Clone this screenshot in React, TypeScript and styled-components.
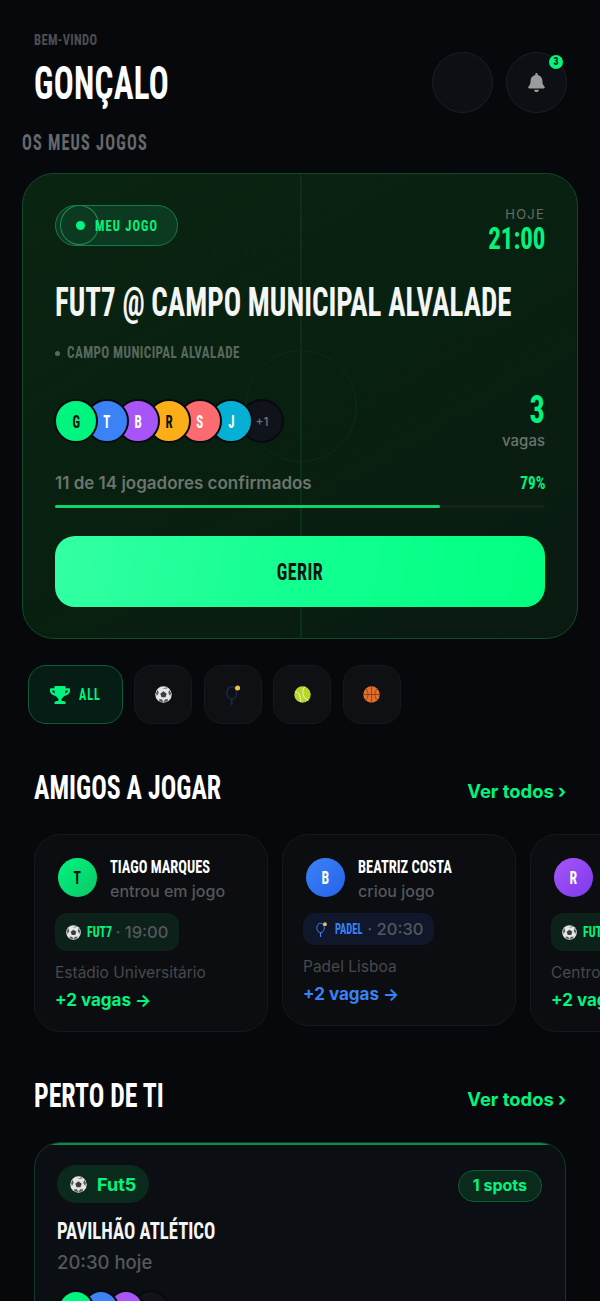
import styled, { createGlobalStyle } from 'styled-components';
import { FaBell, FaTrophy } from 'react-icons/fa';

const display = `"Roboto Condensed", "Liberation Sans Narrow", "DejaVu Sans Condensed", sans-serif`;
const green = '#00f57f';
const blue = '#3b82f6';

// no Bebas here, so the display text is narrowed to the same column widths
const squeeze = (x: number, origin = 'left') => `
    transform: scaleX(${x});
    transform-origin: ${origin} center;
`;

const GlobalStyle = createGlobalStyle`
    html, body {
        margin: 0;
        height: 1301px;
        overflow: hidden;
        background: #07080c;
        font-family: Inter, "Liberation Sans", sans-serif;
    }
    * { box-sizing: border-box; }
`;

const Page = styled.div`
    width: 600px;
    height: 1301px;
    overflow: hidden;
    padding-top: 30px;
`;

const Header = styled.header`
    display: flex;
    justify-content: space-between;
    padding: 0 33px 0 34px;
`;

const Welcome = styled.div`
    font-family: ${display};
    font-weight: 700;
    font-size: 15px;
    line-height: 20px;
    color: #4c4e53;
    letter-spacing: 0.4px;
    ${squeeze(0.84)}
`;

const UserName = styled.h1`
    margin: 6px 0 0;
    font-family: ${display};
    font-weight: 700;
    font-size: 46px;
    line-height: 54px;
    color: #fff;
    letter-spacing: 0.4px;
    ${squeeze(0.72)}
`;

const HeaderActions = styled.div`
    display: flex;
    gap: 13px;
    margin-top: 22px;
`;

const RoundButton = styled.div`
    position: relative;
    width: 61px;
    height: 61px;
    border-radius: 50%;
    background: #0c0f13;
    border: 1.5px solid #1b1e22;
    display: flex;
    align-items: center;
    justify-content: center;
    color: #9a9c9e;
    font-size: 19px;
`;

const Badge = styled.span`
    position: absolute;
    top: 2px;
    right: 3px;
    width: 14px;
    height: 14px;
    border-radius: 50%;
    background: ${green};
    color: #04130b;
    font-family: ${display};
    font-weight: 700;
    font-size: 10px;
    line-height: 14px;
    text-align: center;
`;

const SectionLabel = styled.h2`
    margin: 17px 0 17px 22px;
    font-family: ${display};
    font-weight: 700;
    font-size: 22px;
    line-height: 26px;
    letter-spacing: 1.6px;
    color: #66686c;
    ${squeeze(0.74)}
`;

const HeroCard = styled.section`
    position: relative;
    overflow: hidden;
    width: 556px;
    height: 466px;
    margin-left: 22px;
    padding: 31px 32px;
    border-radius: 32px;
    border: 1.5px solid #0f4a2a;
    background: linear-gradient(150deg, #0a2412 0%, #08200f 50%, #0a1a12 100%);
`;

const PitchLine = styled.div`
    position: absolute;
    top: 0;
    bottom: 0;
    left: 277px;
    width: 1.5px;
    background: #0c2f1b;
`;

const PitchCircle = styled.div`
    position: absolute;
    top: 176px;
    left: 222px;
    width: 112px;
    height: 112px;
    border-radius: 50%;
    border: 1.5px solid #0c2a1a;
`;

const HeroTop = styled.div`
    position: relative;
    display: flex;
    justify-content: space-between;
    align-items: flex-start;
`;

const MinePill = styled.div`
    position: relative;
    display: flex;
    align-items: center;
    gap: 10px;
    width: 123px;
    height: 41px;
    padding-left: 20px;
    border-radius: 21px;
    border: 1.5px solid #1a7a49;
    background: #0b3a20;
    color: ${green};
    font-family: ${display};
    font-weight: 700;
    font-size: 15px;
    letter-spacing: 1.4px;
    white-space: nowrap;
`;

const MineLabel = styled.span`
    ${squeeze(0.83)}
`;

const MineDot = styled.span`
    width: 9px;
    height: 9px;
    flex: none;
    border-radius: 50%;
    background: ${green};
`;

const MineRing = styled.span`
    position: absolute;
    left: 4px;
    top: -1px;
    width: 39px;
    height: 40px;
    border-radius: 50%;
    border: 1.5px solid #1f8a53;
`;

const TimeBlock = styled.div`
    text-align: right;
    margin-top: 1px;
`;

const DayLabel = styled.div`
    font-size: 13px;
    line-height: 16px;
    letter-spacing: 1.2px;
    color: #666d68;
`;

const TimeText = styled.div`
    font-family: ${display};
    font-weight: 700;
    font-size: 32px;
    line-height: 32px;
    color: ${green};
    ${squeeze(0.78, 'right')}
`;

const HeroTitle = styled.h3`
    position: relative;
    margin: 25px 0 0;
    font-family: ${display};
    font-weight: 700;
    font-size: 40px;
    line-height: 48px;
    color: #f4f6f4;
    white-space: nowrap;
    ${squeeze(0.725)}
`;

const VenueRow = styled.div`
    position: relative;
    display: flex;
    align-items: center;
    gap: 7px;
    margin-top: 15px;
    font-family: ${display};
    font-weight: 700;
    font-size: 16px;
    line-height: 22px;
    letter-spacing: 0.5px;
    color: #59685e;
    white-space: nowrap;
`;

const VenueText = styled.span`
    ${squeeze(0.82)}
`;

const VenueDot = styled.span`
    width: 5px;
    height: 5px;
    flex: none;
    border-radius: 50%;
    background: #59685e;
`;

const PlayersRow = styled.div`
    position: relative;
    display: flex;
    justify-content: space-between;
    align-items: flex-start;
    margin-top: 26px;
`;

const AvatarStack = styled.div`
    display: flex;
    margin: 9px 0 0 -1px;
`;

const StackAvatar = styled.div<{ $bg: string; $fg: string; $size: number; $font: number; $overlap: number; $layer: number }>`
    position: relative;
    z-index: ${(p) => p.$layer};
    width: ${(p) => p.$size}px;
    height: ${(p) => p.$size}px;
    flex: none;
    margin-right: -${(p) => p.$overlap}px;
    border-radius: 50%;
    border: 2.5px solid #060a0c;
    background: ${(p) => p.$bg};
    color: ${(p) => p.$fg};
    display: flex;
    align-items: center;
    justify-content: center;
    font-family: ${display};
    font-weight: 700;
    font-size: ${(p) => p.$font}px;
`;

const AvatarLetter = styled.span`
    ${squeeze(0.72, 'center')}
`;

const MoreAvatar = styled(StackAvatar)`
    font-family: Inter, sans-serif;
    font-weight: 500;
`;

const SpotsBlock = styled.div`
    text-align: right;
`;

const SpotsNumber = styled.div`
    font-family: ${display};
    font-weight: 700;
    font-size: 38px;
    line-height: 40px;
    color: ${green};
    ${squeeze(0.8, 'right')}
`;

const SpotsLabel = styled.div`
    margin-top: 1px;
    font-size: 15px;
    font-weight: 500;
    line-height: 20px;
    color: #6a746d;
`;

const ProgressHead = styled.div`
    position: relative;
    display: flex;
    justify-content: space-between;
    align-items: center;
    margin-top: 21px;
    font-size: 17px;
    font-weight: 600;
    line-height: 22px;
    color: #6b756e;
`;

const ProgressValue = styled.span`
    font-family: ${display};
    font-weight: 700;
    font-size: 19px;
    color: ${green};
    ${squeeze(0.8, 'right')}
`;

const ProgressTrack = styled.div`
    position: relative;
    height: 3px;
    margin-top: 11px;
    border-radius: 2px;
    background: #12231a;
`;

const ProgressFill = styled.div`
    height: 100%;
    border-radius: 2px;
    background: #0ed46f;
`;

const ManageButton = styled.button`
    position: relative;
    display: block;
    width: 100%;
    height: 71px;
    margin-top: 28px;
    border: 0;
    border-radius: 20px;
    background: linear-gradient(100deg, #33ffa2 0%, #12ff91 50%, #00ff80 100%);
    color: #04130b;
    font-family: ${display};
    font-weight: 700;
    font-size: 24px;
    letter-spacing: 0.6px;
`;

const ManageLabel = styled.span`
    display: inline-block;
    ${squeeze(0.75, 'center')}
`;

const FilterRow = styled.div`
    display: flex;
    gap: 11.5px;
    margin: 26px 0 0 28px;
`;

const FilterAll = styled.div`
    display: flex;
    align-items: center;
    gap: 9px;
    width: 94.5px;
    height: 59px;
    padding-left: 21px;
    border-radius: 18px;
    border: 1.5px solid #0e5c36;
    background: #061d16;
    color: ${green};
    font-family: ${display};
    font-weight: 700;
    font-size: 16px;
    letter-spacing: 1.4px;
`;

const FilterAllLabel = styled.span`
    ${squeeze(0.75)}
`;

const FilterChip = styled.div`
    display: flex;
    align-items: center;
    justify-content: center;
    width: 58px;
    height: 59px;
    border-radius: 18px;
    border: 1.5px solid #15181c;
    background: #0e1014;
`;

const SectionHead = styled.div<{ $top: number }>`
    display: flex;
    align-items: center;
    justify-content: space-between;
    margin-top: ${(p) => p.$top}px;
    padding: 0 34px;
`;

const SectionTitle = styled.h2`
    margin: 0;
    font-family: ${display};
    font-weight: 700;
    font-size: 34px;
    line-height: 40px;
    color: #fff;
    white-space: nowrap;
    ${squeeze(0.76)}
`;

const SeeAll = styled.span`
    margin-top: 7px;
    font-size: 18.400px;
    font-weight: 700;
    color: ${green};
`;

const FriendsRow = styled.div`
    display: flex;
    align-items: flex-start;
    gap: 14px;
    margin-top: 27px;
    padding-left: 34px;
`;

const FriendCard = styled.article`
    flex: none;
    width: 234px;
    padding: 22px 20px 20px;
    border-radius: 26px;
    border: 1.5px solid #15181c;
    background: #0b0d11;
`;

const FriendHead = styled.div`
    display: flex;
    gap: 13px;
    padding-left: 3px;
`;

const FriendAvatar = styled.div<{ $from: string; $to: string; $fg: string }>`
    width: 39px;
    height: 39px;
    flex: none;
    margin-top: 1px;
    border-radius: 50%;
    background: linear-gradient(135deg, ${(p) => p.$from}, ${(p) => p.$to});
    color: ${(p) => p.$fg};
    display: flex;
    align-items: center;
    justify-content: center;
    font-family: ${display};
    font-weight: 700;
    font-size: 19px;
`;

const FriendName = styled.div`
    margin-top: -1px;
    font-family: ${display};
    font-weight: 700;
    font-size: 18px;
    line-height: 22px;
    color: #fff;
    white-space: nowrap;
    ${squeeze(0.8)}
`;

const FriendAction = styled.div`
    margin-top: 3px;
    font-size: 16px;
    font-weight: 500;
    line-height: 20px;
    color: #54575b;
`;

const GamePill = styled.div<{ $bg: string; $height: number }>`
    display: inline-flex;
    align-items: center;
    gap: 6px;
    height: ${(p) => p.$height}px;
    margin-top: 12px;
    padding: 0 11px;
    border-radius: 12px;
    background: ${(p) => p.$bg};
    font-size: 16.500px;
    font-weight: 500;
    color: #54585b;
    white-space: nowrap;
`;

const GameSport = styled.span<{ $color: string; $trim: number; $scale: number }>`
    margin-right: -${(p) => p.$trim}px;
    font-family: ${display};
    font-weight: 700;
    font-size: 15px;
    color: ${(p) => p.$color};
    ${(p) => squeeze(p.$scale)}
`;

const PlaceText = styled.div`
    margin-top: 11px;
    font-size: 15.500px;
    line-height: 22px;
    color: #46494d;
    white-space: nowrap;
`;

const SpotsLink = styled.div<{ $color: string }>`
    margin-top: 5px;
    font-size: 17px;
    font-weight: 700;
    line-height: 22px;
    color: ${(p) => p.$color};
    white-space: nowrap;
`;

const NearbyCard = styled.article`
    position: relative;
    overflow: hidden;
    width: 532px;
    height: 300px;
    margin: 27px 0 0 34px;
    padding: 22px 23px 22px 22px;
    border-radius: 26px;
    border: 1.5px solid #103a28;
    background: #0b0e12;
`;

const NearbyAccent = styled.div`
    position: absolute;
    top: -1px;
    left: 0;
    right: 0;
    height: 3px;
    background: #0e8a4b;
`;

const NearbyTop = styled.div`
    display: flex;
    justify-content: space-between;
    align-items: center;
`;

const SportTag = styled.div`
    display: flex;
    align-items: center;
    gap: 10px;
    height: 38px;
    padding: 0 13px;
    border-radius: 19px;
    background: #0a2a1c;
    color: ${green};
    font-size: 18px;
    font-weight: 700;
`;

const SpotsTag = styled.div`
    height: 32px;
    margin-top: 4px;
    padding: 0 14px;
    border-radius: 16px;
    border: 1.5px solid #0e5c36;
    background: #0a2a1c;
    color: ${green};
    font-size: 16px;
    font-weight: 700;
    line-height: 29px;
`;

const NearbyName = styled.h3`
    margin: 13px 0 0;
    font-family: ${display};
    font-weight: 700;
    font-size: 24px;
    line-height: 30px;
    color: #f4f5f5;
    white-space: nowrap;
    ${squeeze(0.78)}
`;

const NearbyTime = styled.div`
    margin-top: 4px;
    font-size: 18.500px;
    font-weight: 500;
    line-height: 24px;
    color: #55585c;
`;

const NearbyAvatars = styled.div`
    display: flex;
    margin: 16px 0 0 1px;
`;

function SoccerBall({ size }: { size: number }) {
    return (
        <svg width={size} height={size} viewBox="0 0 32 32">
            <circle cx="16" cy="16" r="15.5" fill="#e6e6e6" />
            <path d="M16 10l6 4.4-2.3 7h-7.4L10 14.4z" fill="#3a3c40" />
            <path d="M11 2.500L16 5l5-2.500 3 1.500-8 1.500zM2 13l3-6 2 6-3.500 6zM30 13l-3-6-2 6 3.500 6zM9 29l-2-4h6l3 5zM23 29l2-4h-6l-3 5z" fill="#55575b" />
        </svg>
    );
}

function PadelRacket({ size, color }: { size: number; color: string }) {
    return (
        <svg width={size} height={size} viewBox="0 0 24 24" fill="none">
            <ellipse cx="10.500" cy="9.500" rx="6" ry="7.500" stroke={color} strokeWidth="1.500" />
            <path d="M10.500 17v6" stroke={color} strokeWidth="2" strokeLinecap="round" />
            <circle cx="17.500" cy="3.500" r="3" fill="#e8c547" />
        </svg>
    );
}

function TennisBall({ size }: { size: number }) {
    return (
        <svg width={size} height={size} viewBox="0 0 32 32">
            <circle cx="16" cy="16" r="15.500" fill="#b9d62a" />
            <path d="M20 1.500C14 9 16 23 27 27M2 11c6 0 10 4 11 19" stroke="#eef5c8" strokeWidth="1.800" fill="none" />
        </svg>
    );
}

function Basketball({ size }: { size: number }) {
    return (
        <svg width={size} height={size} viewBox="0 0 32 32">
            <circle cx="16" cy="16" r="15.500" fill="#e0702c" />
            <path d="M.500 16h31M16 .500v31M5 5c6 6 6 16 0 22M27 5c-6 6-6 16 0 22" stroke="#7a3612" strokeWidth="1.400" fill="none" />
        </svg>
    );
}

const heroPlayers = [
    { label: 'G', bg: green, fg: '#04130b' },
    { label: 'T', bg: blue, fg: '#fff' },
    { label: 'B', bg: '#a855f7', fg: '#fff' },
    { label: 'R', bg: '#fbae17', fg: '#04130b' },
    { label: 'S', bg: '#fb6b6f', fg: '#fff' },
    { label: 'J', bg: '#06b0d4', fg: '#fff' },
];

function App() {
    return (
        <Page>
            <GlobalStyle />
            <Header>
                <div>
                    <Welcome>BEM-VINDO</Welcome>
                    <UserName>GONÇALO</UserName>
                </div>
                <HeaderActions>
                    <RoundButton />
                    <RoundButton>
                        <FaBell />
                        <Badge>3</Badge>
                    </RoundButton>
                </HeaderActions>
            </Header>

            <SectionLabel>OS MEUS JOGOS</SectionLabel>

            <HeroCard>
                <PitchLine />
                <PitchCircle />
                <HeroTop>
                    <MinePill>
                        <MineRing />
                        <MineDot />
                        <MineLabel>MEU JOGO</MineLabel>
                    </MinePill>
                    <TimeBlock>
                        <DayLabel>HOJE</DayLabel>
                        <TimeText>21:00</TimeText>
                    </TimeBlock>
                </HeroTop>
                <HeroTitle>FUT7 @ CAMPO MUNICIPAL ALVALADE</HeroTitle>
                <VenueRow>
                    <VenueDot />
                    <VenueText>CAMPO MUNICIPAL ALVALADE</VenueText>
                </VenueRow>
                <PlayersRow>
                    <AvatarStack>
                        {heroPlayers.map((player, i) => (
                            <StackAvatar key={player.label} $bg={player.bg} $fg={player.fg} $size={44} $font={18} $overlap={13} $layer={7 - i}>
                                <AvatarLetter>{player.label}</AvatarLetter>
                            </StackAvatar>
                        ))}
                        <MoreAvatar $bg="#10141a" $fg="#70757a" $size={44} $font={12} $overlap={13} $layer={1}>+1</MoreAvatar>
                    </AvatarStack>
                    <SpotsBlock>
                        <SpotsNumber>3</SpotsNumber>
                        <SpotsLabel>vagas</SpotsLabel>
                    </SpotsBlock>
                </PlayersRow>
                <ProgressHead>
                    <span>11 de 14 jogadores confirmados</span>
                    <ProgressValue>79%</ProgressValue>
                </ProgressHead>
                <ProgressTrack>
                    <ProgressFill style={{ width: `${(11 / 14) * 100}%` }} />
                </ProgressTrack>
                <ManageButton><ManageLabel>GERIR</ManageLabel></ManageButton>
            </HeroCard>

            <FilterRow>
                <FilterAll>
                    <FaTrophy size={20} />
                    <FilterAllLabel>ALL</FilterAllLabel>
                </FilterAll>
                <FilterChip><SoccerBall size={17} /></FilterChip>
                <FilterChip><PadelRacket size={20} color="#1c2a4a" /></FilterChip>
                <FilterChip><TennisBall size={17} /></FilterChip>
                <FilterChip><Basketball size={17} /></FilterChip>
            </FilterRow>

            <SectionHead $top={43}>
                <SectionTitle>AMIGOS A JOGAR</SectionTitle>
                <SeeAll>Ver todos ›</SeeAll>
            </SectionHead>

            <FriendsRow>
                <FriendCard>
                    <FriendHead>
                        <FriendAvatar $from="#00f57f" $to="#0bc866" $fg="#04130b"><AvatarLetter>T</AvatarLetter></FriendAvatar>
                        <div>
                            <FriendName>TIAGO MARQUES</FriendName>
                            <FriendAction>entrou em jogo</FriendAction>
                        </div>
                    </FriendHead>
                    <GamePill $bg="#0c211a" $height={38}>
                        <SoccerBall size={15} />
                        <GameSport $color={green} $trim={9} $scale={0.8}>FUT7</GameSport>
                        · 19:00
                    </GamePill>
                    <PlaceText>Estádio Universitário</PlaceText>
                    <SpotsLink $color={green}>+2 vagas →</SpotsLink>
                </FriendCard>
                <FriendCard>
                    <FriendHead>
                        <FriendAvatar $from="#3b82f6" $to="#2563eb" $fg="#fff"><AvatarLetter>B</AvatarLetter></FriendAvatar>
                        <div>
                            <FriendName>BEATRIZ COSTA</FriendName>
                            <FriendAction>criou jogo</FriendAction>
                        </div>
                    </FriendHead>
                    <GamePill $bg="#10172a" $height={32}>
                        <PadelRacket size={15} color={blue} />
                        <GameSport $color={blue} $trim={13} $scale={0.7}>PADEL</GameSport>
                        · 20:30
                    </GamePill>
                    <PlaceText>Padel Lisboa</PlaceText>
                    <SpotsLink $color={blue}>+2 vagas →</SpotsLink>
                </FriendCard>
                <FriendCard>
                    <FriendHead>
                        <FriendAvatar $from="#a855f7" $to="#7c3aed" $fg="#fff"><AvatarLetter>R</AvatarLetter></FriendAvatar>
                        <div>
                            <FriendName>RITA SOUSA</FriendName>
                            <FriendAction>entrou em jogo</FriendAction>
                        </div>
                    </FriendHead>
                    <GamePill $bg="#0c211a" $height={38}>
                        <SoccerBall size={15} />
                        <GameSport $color={green} $trim={9} $scale={0.8}>FUT5</GameSport>
                        · 21:00
                    </GamePill>
                    <PlaceText>Centro Desportivo</PlaceText>
                    <SpotsLink $color={green}>+2 vagas →</SpotsLink>
                </FriendCard>
            </FriendsRow>

            <SectionHead $top={43}>
                <SectionTitle>PERTO DE TI</SectionTitle>
                <SeeAll>Ver todos ›</SeeAll>
            </SectionHead>

            <NearbyCard>
                <NearbyAccent />
                <NearbyTop>
                    <SportTag>
                        <SoccerBall size={17} />
                        Fut5
                    </SportTag>
                    <SpotsTag>1 spots</SpotsTag>
                </NearbyTop>
                <NearbyName>PAVILHÃO ATLÉTICO</NearbyName>
                <NearbyTime>20:30 hoje</NearbyTime>
                <NearbyAvatars>
                    <StackAvatar $bg={green} $fg="#04130b" $size={36} $font={15} $overlap={11} $layer={4}><AvatarLetter>G</AvatarLetter></StackAvatar>
                    <StackAvatar $bg={blue} $fg="#fff" $size={36} $font={15} $overlap={11} $layer={3}><AvatarLetter>T</AvatarLetter></StackAvatar>
                    <StackAvatar $bg="#a855f7" $fg="#fff" $size={36} $font={15} $overlap={11} $layer={2}><AvatarLetter>B</AvatarLetter></StackAvatar>
                    <StackAvatar $bg="#10141a" $fg="#70757a" $size={36} $font={12} $overlap={11} $layer={1} />
                </NearbyAvatars>
            </NearbyCard>
        </Page>
    );
}

export default App;
